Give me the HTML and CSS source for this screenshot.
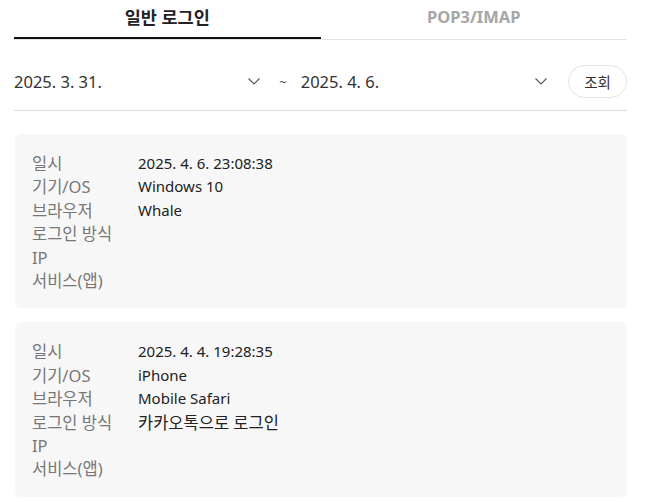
FILE: index.html
```html
<!DOCTYPE html>
<html lang="ko">
<head>
<meta charset="utf-8">
<link rel="stylesheet" href="styles.css">
</head>
<body>
<div class="page">
  <div class="tabs">
    <div class="tab active">일반 로그인</div>
    <div class="tab">POP3/IMAP</div>
  </div>
  <div class="filter">
    <div class="select"><span>2025. 3. 31.</span><svg class="chev" width="12" height="7" viewBox="0 0 12 7"><path d="M0.5 0.5 L6 6 L11.5 0.5" fill="none" stroke="#555" stroke-width="1.1"/></svg></div>
    <span class="tilde">~</span>
    <div class="select"><span>2025. 4. 6.</span><svg class="chev" width="12" height="7" viewBox="0 0 12 7"><path d="M0.5 0.5 L6 6 L11.5 0.5" fill="none" stroke="#555" stroke-width="1.1"/></svg></div>
    <button class="btn">조회</button>
  </div>
  <div class="list">
    <dl class="card">
      <dt>일시</dt><dd>2025. 4. 6. 23:08:38</dd>
      <dt>기기/OS</dt><dd>Windows 10</dd>
      <dt>브라우저</dt><dd>Whale</dd>
      <dt>로그인 방식</dt><dd></dd>
      <dt>IP</dt><dd></dd>
      <dt>서비스(앱)</dt><dd></dd>
    </dl>
    <dl class="card">
      <dt>일시</dt><dd>2025. 4. 4. 19:28:35</dd>
      <dt>기기/OS</dt><dd>iPhone</dd>
      <dt>브라우저</dt><dd>Mobile Safari</dd>
      <dt>로그인 방식</dt><dd class="ko">카카오톡으로 로그인</dd>
      <dt>IP</dt><dd></dd>
      <dt>서비스(앱)</dt><dd></dd>
    </dl>
  </div>
</div>
</body>
</html>
```
FILE: styles.css
```css
html, body {
  margin: 0;
  padding: 0;
  background: #fff;
}
body {
  font-family: "Noto Sans", "Noto Sans CJK KR", sans-serif;
  color: #222;
}
.page {
  padding: 0 21px 0 14px;
}
.tabs {
  display: grid;
  grid-template-columns: 1fr 1fr;
  border-bottom: 1px solid #e3e3e3;
}
.tab {
  height: 37px;
  line-height: 34px;
  text-align: center;
  font-size: 16.5px;
  font-weight: 700;
  color: #a6a6a6;
}
.tab.active {
  font-size: 17.5px;
  color: #222;
  border-bottom: 2px solid #111;
}
.filter {
  display: flex;
  align-items: center;
  padding: 25px 0 12px;
  border-bottom: 1px solid #dcdcdc;
}
.select {
  flex: 1;
  display: flex;
  align-items: center;
  justify-content: space-between;
  padding-right: 5px;
  font-size: 16.5px;
  color: #333;
}
.chev {
  display: block;
}
.tilde {
  margin: 0 14px;
  font-size: 13px;
  color: #444;
}
.btn {
  margin-left: 16px;
  width: 59px;
  height: 33px;
  border: 1px solid #e2e2e2;
  border-radius: 17px;
  background: #fff;
  font-family: inherit;
  font-size: 14.5px;
  color: #333;
  padding: 0;
}
.list {
  display: flex;
  flex-direction: column;
  gap: 14px;
  padding-top: 23px;
}
.card {
  margin: 0 0 0 1px;
  display: grid;
  grid-template-columns: 106px 1fr;
  grid-auto-rows: 23.4px;
  align-items: center;
  padding: 18px 17px 16px;
  background: #f7f7f7;
  border-radius: 6px;
  font-size: 15px;
  line-height: 23.4px;
}
.card dt {
  font-size: 16.5px;
  color: #777;
}
.card dd {
  margin: 0;
  color: #222;
}
.card dd.ko {
  font-size: 16.5px;
}
```
